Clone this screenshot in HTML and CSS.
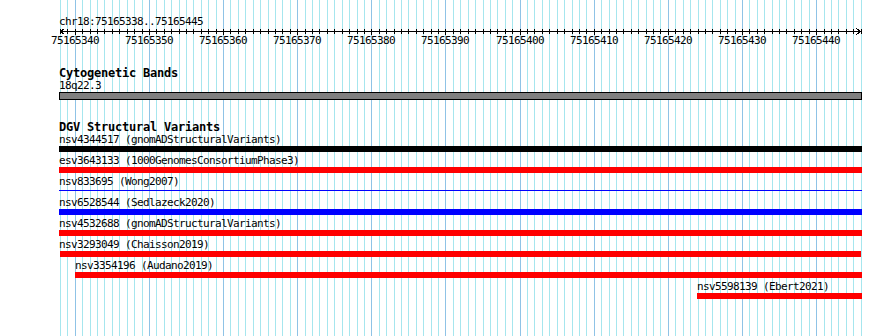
FILE: index.html
```html
<!DOCTYPE html>
<html>
<head>
<meta charset="utf-8">
<link rel="stylesheet" href="styles.css">
</head>
<body>
<svg class="grid" width="890" height="336" viewBox="0 0 890 336">
  <defs>
    <path id="gminor" d="M60.5 0V336M67.5 0V336M82.5 0V336M90.5 0V336M97.5 0V336M104.5 0V336M112.5 0V336M119.5 0V336M127.5 0V336M134.5 0V336M142.5 0V336M156.5 0V336M164.5 0V336M171.5 0V336M179.5 0V336M186.5 0V336M193.5 0V336M201.5 0V336M208.5 0V336M216.5 0V336M230.5 0V336M238.5 0V336M245.5 0V336M253.5 0V336M260.5 0V336M268.5 0V336M275.5 0V336M282.5 0V336M290.5 0V336M305.5 0V336M312.5 0V336M319.5 0V336M327.5 0V336M334.5 0V336M342.5 0V336M349.5 0V336M357.5 0V336M364.5 0V336M379.5 0V336M386.5 0V336M394.5 0V336M401.5 0V336M408.5 0V336M416.5 0V336M423.5 0V336M431.5 0V336M438.5 0V336M453.5 0V336M460.5 0V336M468.5 0V336M475.5 0V336M483.5 0V336M490.5 0V336M497.5 0V336M505.5 0V336M512.5 0V336M527.5 0V336M534.5 0V336M542.5 0V336M549.5 0V336M557.5 0V336M564.5 0V336M572.5 0V336M579.5 0V336M586.5 0V336M601.5 0V336M609.5 0V336M616.5 0V336M623.5 0V336M631.5 0V336M638.5 0V336M646.5 0V336M653.5 0V336M660.5 0V336M675.5 0V336M683.5 0V336M690.5 0V336M698.5 0V336M705.5 0V336M712.5 0V336M720.5 0V336M727.5 0V336M735.5 0V336M749.5 0V336M757.5 0V336M764.5 0V336M772.5 0V336M779.5 0V336M786.5 0V336M794.5 0V336M801.5 0V336M809.5 0V336M824.5 0V336M831.5 0V336M838.5 0V336M846.5 0V336M853.5 0V336M861.5 0V336"/>
    <path id="gmajor" d="M75.5 0V336M149.5 0V336M223.5 0V336M297.5 0V336M371.5 0V336M445.5 0V336M520.5 0V336M594.5 0V336M668.5 0V336M742.5 0V336M816.5 0V336"/>
  </defs>
  <use href="#gminor" class="grid-minor"/>
  <use href="#gmajor" class="grid-major"/>
</svg>

<div class="panel">
  <div class="locus">chr18:75165338..75165445</div>

  <svg class="ruler" width="890" height="18" viewBox="0 0 890 18">
    <defs>
      <clipPath id="minorclip"><rect x="0" y="1" width="890" height="5"/></clipPath>
      <clipPath id="majorclip"><rect x="0" y="1" width="890" height="6"/></clipPath>
    </defs>
    <use href="#gminor" class="tick" clip-path="url(#minorclip)"/>
    <use href="#gmajor" class="tick" clip-path="url(#majorclip)"/>
    <path class="axis" d="M60 3.5H861M64.5 0.5L60.5 3.5L64.5 6.5M856.5 0.5L860.5 3.5L856.5 6.5"/>
    <g class="ruler-labels">
      <text x="75" y="16">75165340</text>
      <text x="149" y="16">75165350</text>
      <text x="223" y="16">75165360</text>
      <text x="297" y="16">75165370</text>
      <text x="371" y="16">75165380</text>
      <text x="445" y="16">75165390</text>
      <text x="520" y="16">75165400</text>
      <text x="594" y="16">75165410</text>
      <text x="668" y="16">75165420</text>
      <text x="742" y="16">75165430</text>
      <text x="816" y="16">75165440</text>
    </g>
  </svg>

  <section class="track">
    <h2 class="track-title">Cytogenetic Bands</h2>
    <div class="feature" style="width:803px">
      <div class="label">18q22.3</div>
      <div class="band"></div>
    </div>
  </section>

  <section class="track">
    <h2 class="track-title">DGV Structural Variants</h2>
    <div class="rows">
      <div class="feature" style="width:803px">
        <div class="label">nsv4344517 (gnomADStructuralVariants)</div>
        <div class="bar black"></div>
      </div>
      <div class="feature" style="width:803px">
        <div class="label">esv3643133 (1000GenomesConsortiumPhase3)</div>
        <div class="bar red"></div>
      </div>
      <div class="feature" style="width:803px">
        <div class="label">nsv833695 (Wong2007)</div>
        <div class="bar thin"></div>
      </div>
      <div class="feature" style="width:803px">
        <div class="label">nsv6528544 (Sedlazeck2020)</div>
        <div class="bar blue"></div>
      </div>
      <div class="feature" style="width:803px">
        <div class="label">nsv4532688 (gnomADStructuralVariants)</div>
        <div class="bar red"></div>
      </div>
      <div class="feature" style="margin-left:1px;width:801px">
        <div class="label shift-back">nsv3293049 (Chaisson2019)</div>
        <div class="bar red"></div>
      </div>
      <div class="feature" style="margin-left:16px;width:787px">
        <div class="label">nsv3354196 (Audano2019)</div>
        <div class="bar red"></div>
      </div>
      <div class="feature" style="margin-left:638px;width:165px">
        <div class="label">nsv5598139 (Ebert2021)</div>
        <div class="bar red"></div>
      </div>
    </div>
  </section>
</div>
</body>
</html>
```

FILE: styles.css
```css
html, body {
  margin: 0;
  padding: 0;
  background: #ffffff;
}

body {
  position: relative;
  width: 890px;
  height: 336px;
  overflow: hidden;
  font-family: "DejaVu Sans Mono", "Liberation Mono", monospace;
  color: #000000;
}

.grid {
  position: absolute;
  left: 0;
  top: 0;
  z-index: 0;
  shape-rendering: crispEdges;
}

.grid-minor {
  stroke: #a6e6ee;
  stroke-width: 1;
  fill: none;
}

.grid-major {
  stroke: #8fc3e6;
  stroke-width: 1;
  fill: none;
}

.panel {
  position: relative;
  z-index: 1;
}

.locus {
  margin-top: 15px;
  padding-left: 59px;
  height: 13px;
  line-height: 13px;
  font-size: 11px;
  letter-spacing: -0.62px;
  white-space: nowrap;
}

.ruler {
  display: block;
  shape-rendering: crispEdges;
}

.tick {
  stroke: #000000;
  stroke-width: 1;
  fill: none;
}

.axis {
  stroke: #000000;
  stroke-width: 1;
  fill: none;
}

.ruler-labels text {
  font-family: "DejaVu Sans Mono", "Liberation Mono", monospace;
  font-size: 11px;
  letter-spacing: -0.62px;
  text-anchor: middle;
  fill: #000000;
}

.track {
  margin-top: 21px;
  padding-left: 59px;
}

.track-title {
  margin: 0;
  height: 12px;
  line-height: 12px;
  font-size: 12px;
  font-weight: bold;
  letter-spacing: -0.22px;
  white-space: nowrap;
}

.feature {
  display: flex;
  flex-direction: column;
}

.label {
  height: 13px;
  line-height: 13px;
  font-size: 11px;
  letter-spacing: -0.62px;
  white-space: nowrap;
}

.label.shift-back {
  margin-left: -1px;
}

.band {
  box-sizing: border-box;
  height: 8px;
  border: 1px solid #000000;
  background: #808080;
}

.rows {
  display: flex;
  flex-direction: column;
}

.rows .feature {
  height: 21px;
}

.rows .label {
  margin-top: 0;
}

.bar {
  height: 6px;
}

.bar.black {
  background: #000000;
}

.bar.red {
  background: #ff0000;
}

.bar.blue {
  background: #0000ff;
}

.bar.thin {
  height: 1px;
  margin-top: 2px;
  background: #0000ff;
}
```
